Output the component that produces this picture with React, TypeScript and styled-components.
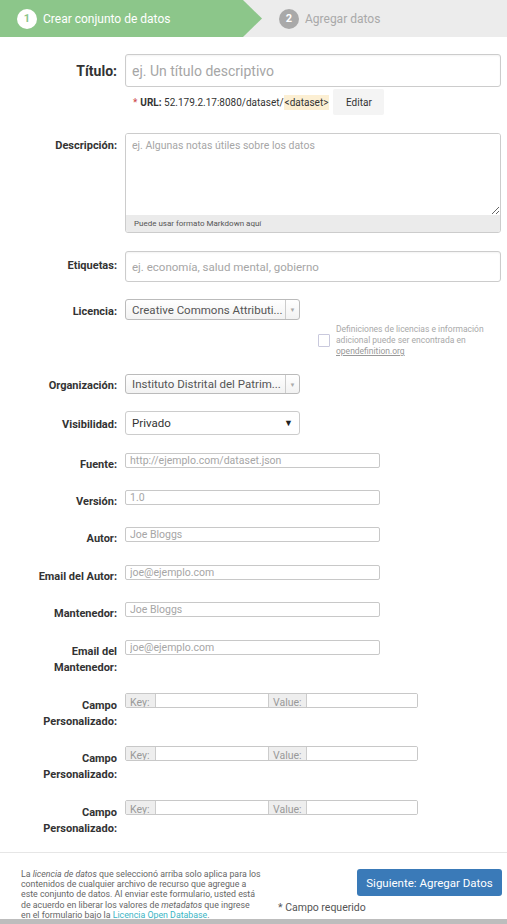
import React from "react";
import styled, { createGlobalStyle } from "styled-components";

const Global = createGlobalStyle`
  html, body { margin: 0; padding: 0; background: #fff; }
  body { font-family: Roboto, "Liberation Sans", sans-serif; color: #333; }
  * { box-sizing: border-box; }
  input::placeholder, textarea::placeholder { color: #a6a6a6; opacity: 1; }
`;

const Page = styled.div`
  width: 507px;
  height: 924px;
  display: flex;
  flex-direction: column;
  overflow: hidden;
  & > * { flex-shrink: 0; }
`;

const Steps = styled.div`
  height: 37px;
  background: #ececec;
  display: flex;
  align-items: stretch;
`;

const Step = styled.div<{ $active?: boolean }>`
  display: flex;
  align-items: center;
  gap: 6px;
  font-size: 12px;
  ${(p) =>
    p.$active
      ? `
    width: 262px;
    padding-left: 17px;
    background: #8cc68a;
    color: #fff;
    clip-path: polygon(0 0, 243px 0, 262px 50%, 243px 100%, 0 100%);
  `
      : `
    padding-left: 17px;
    color: #a9a9a9;
  `}
`;

const Num = styled.span<{ $active?: boolean }>`
  width: 20px;
  height: 20px;
  border-radius: 50%;
  display: inline-flex;
  align-items: center;
  justify-content: center;
  font-size: 11px;
  font-weight: 700;
  background: ${(p) => (p.$active ? "#fff" : "#a9a9a9")};
  color: ${(p) => (p.$active ? "#8cc68a" : "#fff")};
`;

const Form = styled.form`
  display: flex;
  flex-direction: column;
  padding-right: 6px;
  margin: 0;
`;

const Row = styled.div<{ $mt: number }>`
  display: grid;
  grid-template-columns: 117px 1fr;
  column-gap: 8px;
  margin-top: ${(p) => p.$mt}px;
  align-items: start;
`;

const Label = styled.label<{ $pt: number; $big?: boolean }>`
  text-align: right;
  font-weight: 700;
  color: #333;
  font-size: ${(p) => (p.$big ? 14 : 11)}px;
  line-height: ${(p) => (p.$big ? 20 : 16)}px;
  padding-top: ${(p) => p.$pt}px;
`;

const BigInput = styled.input<{ $h: number; $fs: number }>`
  width: 376px;
  height: ${(p) => p.$h}px;
  border: 1px solid #ccc;
  border-radius: 3px;
  padding: 0 6px;
  font-family: inherit;
  font-size: ${(p) => p.$fs}px;
  box-shadow: inset 0 1px 2px rgba(0, 0, 0, 0.05);
  color: #555;
`;

const UrlLine = styled.div`
  display: flex;
  align-items: center;
  font-size: 10px;
  color: #333;
  padding-left: 8px;
`;

const Req = styled.span`
  color: #c44;
  margin-right: 3px;
`;

const Slug = styled.span`
  background: #fcefd3;
  padding: 2px 1px;
`;

const EditBtn = styled.button`
  margin-left: 4px;
  width: 51px;
  height: 26px;
  border: none;
  border-radius: 2px;
  background: #f4f4f4;
  font-family: inherit;
  font-size: 10px;
  color: #333;
`;

const AreaBox = styled.div`
  width: 376px;
  border: 1px solid #ccc;
  border-radius: 3px;
  overflow: hidden;
  display: flex;
  flex-direction: column;
`;

const Area = styled.textarea`
  height: 81px;
  border: none;
  resize: vertical;
  padding: 5px 6px;
  font-family: inherit;
  font-size: 10.5px;
  outline: none;
`;

const AreaFoot = styled.div`
  height: 17px;
  background: #ebebeb;
  font-size: 8px;
  color: #555;
  padding-left: 8px;
  display: flex;
  align-items: center;
`;

const Select = styled.div<{ $h: number }>`
  width: 175px;
  height: ${(p) => p.$h}px;
  border: 1px solid #bbb;
  border-radius: 3px;
  background: linear-gradient(#fff, #f2f2f2);
  display: flex;
  align-items: stretch;
  font-size: 11.5px;
  color: #555;
  overflow: hidden;
`;

const SelText = styled.span`
  flex: 1;
  padding-left: 6px;
  display: flex;
  align-items: center;
  white-space: nowrap;
`;

const SelArrow = styled.span`
  width: 14px;
  border-left: 1px solid #ccc;
  display: flex;
  align-items: center;
  justify-content: center;
  color: #aaa;
  font-size: 6px;
`;

const NativeSelect = styled.div`
  width: 175px;
  height: 24px;
  border: 1px solid #ccc;
  border-radius: 3px;
  background: #fff;
  display: flex;
  align-items: center;
  justify-content: space-between;
  padding: 0 6px;
  font-size: 11.5px;
  color: #333;
`;

const Caret = styled.span`
  font-size: 9px;
  color: #222;
`;

const Help = styled.div`
  margin-top: 4px;
  margin-left: 318px;
  display: flex;
  align-items: center;
  gap: 6px;
  font-size: 8.5px;
  line-height: 11px;
  color: #a9a9a9;
  width: 170px;
`;

const Check = styled.span`
  flex: none;
  width: 12px;
  height: 13px;
  border: 1px solid #c9c9dd;
  border-radius: 1px;
`;

const HelpLink = styled.span`
  text-decoration: underline;
  color: #999;
`;

const SmallInput = styled.input`
  width: 255px;
  height: 15px;
  border: 1px solid #c8c8c8;
  border-radius: 2px;
  padding: 0 4px;
  font-family: inherit;
  font-size: 10.5px;
  color: #555;
`;

const KV = styled.div`
  display: flex;
  width: 293px;
  height: 15px;
  border: 1px solid #c8c8c8;
  border-radius: 2px;
  overflow: hidden;
`;

const KVTag = styled.span<{ $w: number }>`
  width: ${(p) => p.$w}px;
  background: #eee;
  border-right: 1px solid #ccc;
  border-left: 1px solid #ccc;
  font-size: 10.5px;
  color: #999;
  line-height: 17px;
  padding-left: 4px;
  &:first-child { border-left: none; }
`;

const KVInput = styled.input<{ $w: number }>`
  width: ${(p) => p.$w}px;
  border: none;
  height: 13px;
  padding: 0;
`;

const Divider = styled.hr`
  margin: 15px 0 0;
  border: none;
  border-top: 1px solid #e6e6e6;
`;

const Footer = styled.div`
  display: flex;
  justify-content: space-between;
  padding: 16px 5px 0 21px;
  height: 66px;
`;

const Note = styled.p`
  margin: 0;
  width: 250px;
  font-size: 8.8px;
  line-height: 10.2px;
  color: #666;
  white-space: nowrap;
`;

const Teal = styled.span`
  color: #3ab5c5;
`;

const Actions = styled.div`
  display: flex;
  flex-direction: column;
  align-items: flex-end;
`;

const Primary = styled.button`
  width: 145px;
  height: 27px;
  border: none;
  border-radius: 3px;
  background: #3a7ab8;
  color: #fff;
  font-family: inherit;
  font-size: 11.5px;
`;

const ReqNote = styled.div`
  align-self: flex-start;
  margin-left: -79px;
  margin-top: 5px;
  font-size: 10.5px;
  color: #555;
`;

const BottomBar = styled.div`
  height: 6px;
  background: #bdbdbd;
`;

const smallFields: [string, string, number][] = [
  ["Fuente:", "http://ejemplo.com/dataset.json", 18],
  ["Versión:", "1.0", 17],
  ["Autor:", "Joe Bloggs", 17],
  ["Email del Autor:", "joe@ejemplo.com", 18],
  ["Mantenedor:", "Joe Bloggs", 17],
];

export default function App() {
  return (
    <Page>
      <Global />
      <Steps>
        <Step $active>
          <Num $active>1</Num>Crear conjunto de datos
        </Step>
        <Step>
          <Num>2</Num>Agregar datos
        </Step>
      </Steps>
      <Form>
        <Row $mt={17}>
          <Label $big $pt={7}>Título:</Label>
          <BigInput $h={33} $fs={14} placeholder="ej. Un título descriptivo" />
        </Row>
        <Row $mt={2}>
          <span />
          <UrlLine>
            <Req>*</Req>
            <b>URL:</b>&nbsp;52.179.2.17:8080/dataset/<Slug>&lt;dataset&gt;</Slug>
            <EditBtn type="button">Editar</EditBtn>
          </UrlLine>
        </Row>
        <Row $mt={18}>
          <Label $pt={5}>Descripción:</Label>
          <AreaBox>
            <Area placeholder="ej. Algunas notas útiles sobre los datos" />
            <AreaFoot>Puede usar formato Markdown aquí</AreaFoot>
          </AreaBox>
        </Row>
        <Row $mt={18}>
          <Label $pt={7}>Etiquetas:</Label>
          <BigInput $h={31} $fs={11.5} placeholder="ej. economía, salud mental, gobierno" />
        </Row>
        <Row $mt={17}>
          <Label $pt={5}>Licencia:</Label>
          <Select $h={21}>
            <SelText>Creative Commons Attributi...</SelText>
            <SelArrow>▼</SelArrow>
          </Select>
        </Row>
        <Help>
          <Check />
          <span>
            Definiciones de licencias e información adicional puede ser encontrada en{" "}
            <HelpLink>opendefinition.org</HelpLink>
          </span>
        </Help>
        <Row $mt={17}>
          <Label $pt={4}>Organización:</Label>
          <Select $h={20}>
            <SelText>Instituto Distrital del Patrim...</SelText>
            <SelArrow>▼</SelArrow>
          </Select>
        </Row>
        <Row $mt={17}>
          <Label $pt={6}>Visibilidad:</Label>
          <NativeSelect>
            Privado <Caret>▼</Caret>
          </NativeSelect>
        </Row>
        {smallFields.map(([label, ph, mt]) => (
          <Row key={label} $mt={mt}>
            <Label $pt={4}>{label}</Label>
            <SmallInput placeholder={ph} />
          </Row>
        ))}
        <Row $mt={18}>
          <Label $pt={4}>
            Email del
            <br />
            Mantenedor:
          </Label>
          <SmallInput placeholder="joe@ejemplo.com" />
        </Row>
        {[17, 16, 17].map((mt, i) => (
          <Row key={i} $mt={mt}>
            <Label $pt={5}>
              Campo
              <br />
              Personalizado:
            </Label>
            <KV>
              <KVTag $w={30}>Key:</KVTag>
              <KVInput $w={112} />
              <KVTag $w={39}>Value:</KVTag>
              <KVInput $w={110} />
            </KV>
          </Row>
        ))}
      </Form>
      <Divider />
      <Footer>
        <Note>
          La <i>licencia de datos</i> que seleccionó arriba solo aplica para los
          <br />
          contenidos de cualquier archivo de recurso que agregue a
          <br />
          este conjunto de datos. Al enviar este formulario, usted está
          <br />
          de acuerdo en liberar los valores de <i>metadatos</i> que ingrese
          <br />
          en el formulario bajo la <Teal>Licencia Open Database</Teal>.
        </Note>
        <Actions>
          <Primary type="button">Siguiente: Agregar Datos</Primary>
          <ReqNote>* Campo requerido</ReqNote>
        </Actions>
      </Footer>
      <BottomBar />
    </Page>
  );
}
